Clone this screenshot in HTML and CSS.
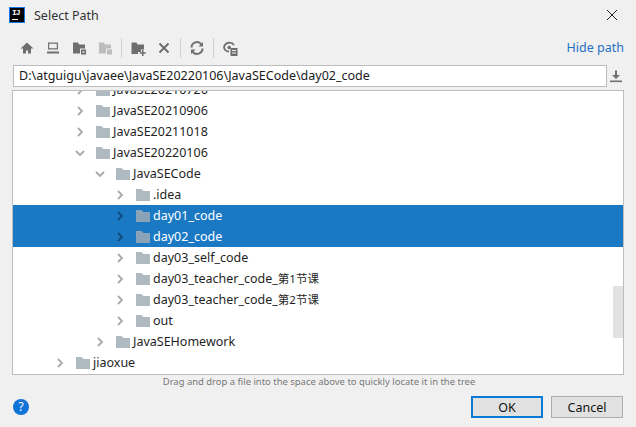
FILE: index.html
```html
<!DOCTYPE html>
<html lang="en">
<head>
<meta charset="utf-8">
<title>Select Path</title>
<link rel="stylesheet" href="styles.css">
</head>
<body>
<div class="dialog">
  <header class="titlebar">
    <div class="logo"><span class="logo-text">IJ</span><span class="logo-bar"></span></div>
    <div class="title">Select Path</div>
    <svg class="close" width="12" height="12" viewBox="0 0 12 12"><path d="M1 1l10 10M11 1L1 11" stroke="#222" stroke-width="1" fill="none"/></svg>
  </header>
  <div class="toolbar">
    <div class="tools">
      <svg class="tool" width="16" height="16" viewBox="0 0 16 16"><path d="M8 2.500L1.500 8.500H4v5h3v-3h2v3h3v-5h2.500z" fill="#6e6e6e"/></svg>
      <svg class="tool" width="16" height="16" viewBox="0 0 16 16"><path d="M3 2.500h10v7H3zM4.200 3.700v4.600h7.600V3.700z" fill="#6e6e6e" fill-rule="evenodd"/><rect x="2" y="11.500" width="12" height="2" fill="#6e6e6e"/></svg>
      <svg class="tool" width="16" height="16" viewBox="0 0 16 16"><path d="M2 2.500h5l1 2h6v4H9v5H2z" fill="#6e6e6e"/><path d="M10 9.500h5v5h-5zM11.500 11.300v1.500h2v-1.500z" fill="#6e6e6e" fill-rule="evenodd"/></svg>
      <svg class="tool" width="16" height="16" viewBox="0 0 16 16"><path d="M2 2.500h5l1 2h6v4H9v5H2z" fill="#bdbdbd"/><rect x="10" y="9.500" width="5" height="5" fill="#bdbdbd"/></svg>
      <span class="sep"></span>
      <svg class="tool" width="16" height="16" viewBox="0 0 16 16"><path d="M1.500 2.500h5l1 2h6.500v5h-3v2.500H8v2H1.500z" fill="#6e6e6e"/><path d="M12 10v2.200H9.800v1.500H12V16h1.500v-2.300h2.300v-1.500h-2.300V10z" fill="#6e6e6e"/></svg>
      <svg class="tool" width="16" height="16" viewBox="0 0 16 16"><path d="M3.500 3.500l9 9M12.500 3.500l-9 9" stroke="#6e6e6e" stroke-width="2" fill="none"/></svg>
      <span class="sep"></span>
      <svg class="tool" width="16" height="16" viewBox="0 0 16 16"><path d="M2.500 7.500A5.500 5.500 0 0 1 12.300 4.200M13.500 8.500A5.500 5.500 0 0 1 3.700 11.800" stroke="#6e6e6e" stroke-width="2" fill="none"/><path d="M14 2v4.500H9.500zM2 14V9.500h4.500z" fill="#6e6e6e"/></svg>
      <span class="sep"></span>
      <svg class="tool" width="16" height="16" viewBox="0 0 16 16"><path d="M2 8a5.500 5.500 0 0 1 10-3" stroke="#6e6e6e" stroke-width="1.800" fill="none"/><path d="M2 8a5.500 5.500 0 0 0 5 3.500" stroke="#6e6e6e" stroke-width="1.800" fill="none"/><circle cx="7.200" cy="7.500" r="1.800" fill="#6e6e6e"/><path d="M8.500 8h7v8h-7zM10 10v1h4v-1zM10 12.500v1h4v-1z" fill="#6e6e6e" fill-rule="evenodd"/></svg>
    </div>
    <a class="hide-path">Hide path</a>
  </div>
  <div class="path-row">
    <div class="path-input">D:\atguigu\javaee\JavaSE20220106\JavaSECode\day02_code</div>
    <svg class="download" width="12" height="13" viewBox="0 0 12 13"><path d="M5 0.500h2v4.500h3l-4 4-4-4h3z" fill="#6e6e6e"/><rect x="0" y="10.500" width="12" height="1.600" fill="#6e6e6e"/></svg>
  </div>
  <div class="tree">
    <div class="rows">
      <div class="row d2"><svg class="chev" viewBox="0 0 10 10"><use href="#right"/></svg><svg class="folder" viewBox="0 0 14 12"><use href="#fold"/></svg><span>JavaSE20210726</span></div>
      <div class="row d2"><svg class="chev" viewBox="0 0 10 10"><use href="#right"/></svg><svg class="folder" viewBox="0 0 14 12"><use href="#fold"/></svg><span>JavaSE20210906</span></div>
      <div class="row d2"><svg class="chev" viewBox="0 0 10 10"><use href="#right"/></svg><svg class="folder" viewBox="0 0 14 12"><use href="#fold"/></svg><span>JavaSE20211018</span></div>
      <div class="row d2"><svg class="chev" viewBox="0 0 10 10"><use href="#down"/></svg><svg class="folder" viewBox="0 0 14 12"><use href="#fold"/></svg><span>JavaSE20220106</span></div>
      <div class="row d3"><svg class="chev" viewBox="0 0 10 10"><use href="#down"/></svg><svg class="folder" viewBox="0 0 14 12"><use href="#fold"/></svg><span>JavaSECode</span></div>
      <div class="row d4"><svg class="chev" viewBox="0 0 10 10"><use href="#right"/></svg><svg class="folder" viewBox="0 0 14 12"><use href="#fold"/></svg><span>.idea</span></div>
      <div class="row d4 selected"><svg class="chev" viewBox="0 0 10 10"><use href="#right"/></svg><svg class="folder" viewBox="0 0 14 12"><use href="#fold"/></svg><span>day01_code</span></div>
      <div class="row d4 selected"><svg class="chev" viewBox="0 0 10 10"><use href="#right"/></svg><svg class="folder" viewBox="0 0 14 12"><use href="#fold"/></svg><span>day02_code</span></div>
      <div class="row d4"><svg class="chev" viewBox="0 0 10 10"><use href="#right"/></svg><svg class="folder" viewBox="0 0 14 12"><use href="#fold"/></svg><span>day03_self_code</span></div>
      <div class="row d4"><svg class="chev" viewBox="0 0 10 10"><use href="#right"/></svg><svg class="folder" viewBox="0 0 14 12"><use href="#fold"/></svg><span>day03_teacher_code_<span class="cjk">第1节课</span></span></div>
      <div class="row d4"><svg class="chev" viewBox="0 0 10 10"><use href="#right"/></svg><svg class="folder" viewBox="0 0 14 12"><use href="#fold"/></svg><span>day03_teacher_code_<span class="cjk">第2节课</span></span></div>
      <div class="row d4"><svg class="chev" viewBox="0 0 10 10"><use href="#right"/></svg><svg class="folder" viewBox="0 0 14 12"><use href="#fold"/></svg><span>out</span></div>
      <div class="row d3"><svg class="chev" viewBox="0 0 10 10"><use href="#right"/></svg><svg class="folder" viewBox="0 0 14 12"><use href="#fold"/></svg><span>JavaSEHomework</span></div>
      <div class="row d1"><svg class="chev" viewBox="0 0 10 10"><use href="#right"/></svg><svg class="folder" viewBox="0 0 14 12"><use href="#fold"/></svg><span>jiaoxue</span></div>
    </div>
    <div class="scrollbar"></div>
  </div>
  <div class="hint">Drag and drop a file into the space above to quickly locate it in the tree</div>
  <footer class="footer">
    <div class="help">?</div>
    <div class="buttons">
      <button class="btn primary">OK</button>
      <button class="btn">Cancel</button>
    </div>
  </footer>
</div>
<svg class="defs" width="0" height="0">
  <defs>
    <path id="right" d="M3 1l4 4-4 4" stroke-width="1.800" fill="none" stroke="currentColor"/>
    <path id="down" d="M1 3l4 4 4-4" stroke-width="1.800" fill="none" stroke="currentColor"/>
    <path id="fold" d="M0 0h5.500l2 2H14v10H0z" fill="currentColor"/>
  </defs>
</svg>
</body>
</html>
```
FILE: styles.css
```css
* { box-sizing: border-box; }
html, body { margin: 0; padding: 0; }
body {
  width: 636px;
  height: 427px;
  overflow: hidden;
  background: #f0f0f0;
  font-family: "Noto Sans", "Noto Sans CJK SC", sans-serif;
  font-size: 12.5px;
  color: #1f1f1f;
}
.dialog { display: flex; flex-direction: column; height: 427px; }
.titlebar {
  display: flex;
  align-items: center;
  height: 30px;
  padding: 0 18px 0 9px;
  flex: none;
}
.logo {
  width: 16px;
  height: 16px;
  background: #000;
  border: 1px solid #1a73e8;
  display: flex;
  flex-direction: column;
  padding: 0 0 0 2px;
  flex: none;
}
.logo-text {
  color: #fff;
  font: bold 8px/9px "Liberation Mono", monospace;
  letter-spacing: -1px;
}
.logo-bar { width: 6px; height: 1px; background: #fff; margin-top: 2px; }
.title { margin-left: 9px; font-size: 12.5px; color: #333; flex: 1; }
.close { flex: none; }
.toolbar {
  display: flex;
  align-items: center;
  justify-content: space-between;
  height: 35px;
  padding: 0 12px 0 19px;
  flex: none;
}
.tools { display: flex; align-items: center; gap: 10px; }
.tool { flex: none; display: block; }
.sep { width: 1px; height: 20px; background: #d1d1d1; margin: 0 -2px; }
.hide-path { color: #2470c2; font-size: 12.5px; }
.path-row {
  display: flex;
  align-items: center;
  padding: 0 6px 0 13px;
  height: 22px;
  flex: none;
  gap: 3px;
}
.path-input {
  width: 594px;
  height: 22px;
  background: #fff;
  border: 1px solid #bdbdbd;
  padding: 0 5px;
  line-height: 20px;
  white-space: nowrap;
  overflow: hidden;
  color: #1a1a1a;
}
.download { flex: none; }
.tree {
  position: relative;
  margin: 3px 0 0 12px;
  width: 612px;
  height: 285px;
  background: #fff;
  border: 1px solid #bdbdbd;
  overflow: hidden;
  flex: none;
}
.rows { margin-top: -12px; }
.row {
  display: flex;
  align-items: center;
  height: 21px;
  white-space: nowrap;
  color: #1f1f1f;
}
.d1 { padding-left: 42px; }
.d2 { padding-left: 62px; }
.d3 { padding-left: 82px; }
.d4 { padding-left: 102px; }
.chev { width: 10px; height: 10px; color: #a9a9a9; flex: none; }
.folder { width: 14px; height: 12px; margin-left: 11px; margin-right: 3px; color: #aeb9c0; flex: none; }
.cjk { font-size: 11.5px; }
.selected { background: #1b79c4; color: #fff; }
.selected .chev { color: #0f4a7d; }
.selected .folder { color: #8aa3b8; }
.scrollbar {
  position: absolute;
  right: 0;
  top: 195px;
  width: 10px;
  height: 52px;
  background: #e1e1e1;
}
.hint {
  text-align: center;
  font-size: 9.45px;
  line-height: 13px;
  height: 14px;
  color: #787878;
  padding-left: 2px;
  flex: none;
}
.footer {
  display: flex;
  align-items: center;
  justify-content: space-between;
  padding: 0 13px;
  margin-top: 7px;
  flex: none;
}
.help {
  width: 16px;
  height: 16px;
  border-radius: 50%;
  background: #0f73d8;
  color: #fff;
  text-align: center;
  font-size: 12px;
  line-height: 16px;
}
.buttons { display: flex; gap: 8px; }
.btn {
  width: 72px;
  height: 22px;
  padding: 0;
  background: #e1e1e1;
  border: 1px solid #adadad;
  font: inherit;
  color: #111;
}
.primary { border: 2px solid #0a7ad6; }
.defs { position: absolute; }
```
